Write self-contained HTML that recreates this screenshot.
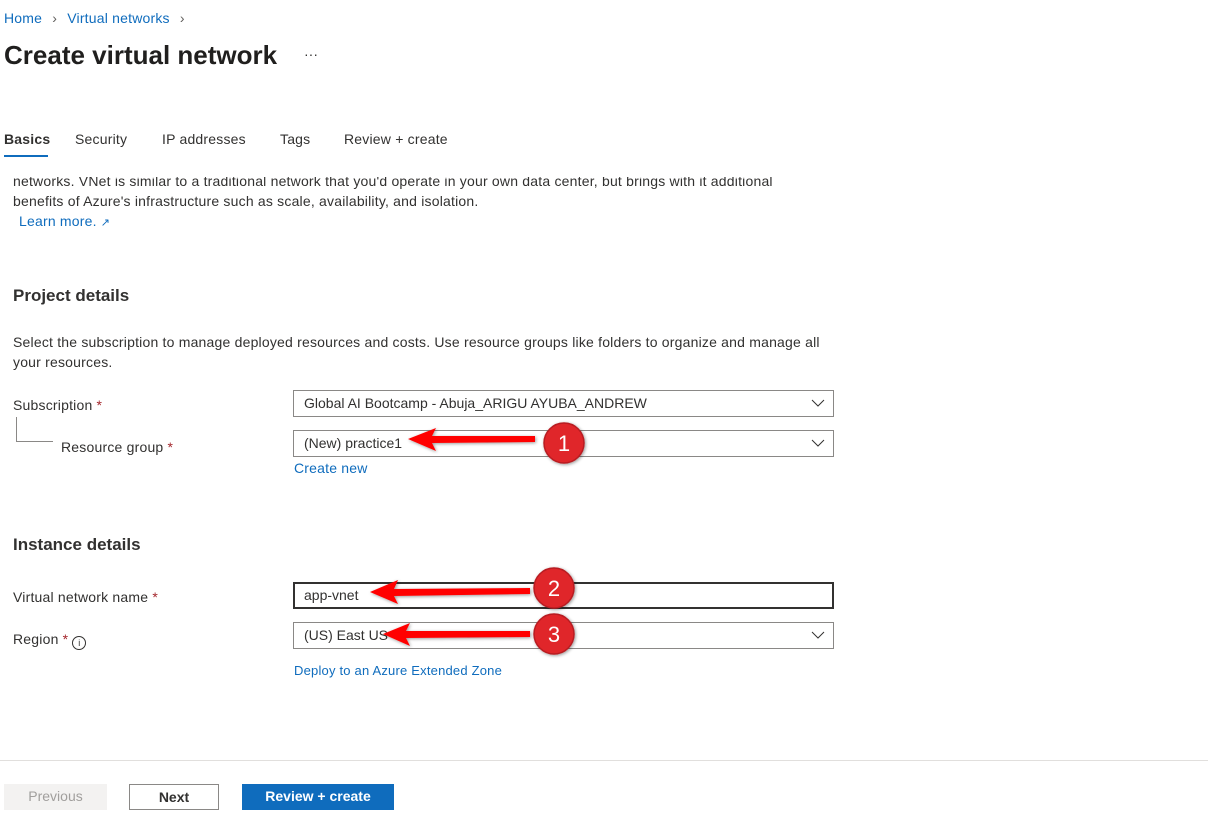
<!DOCTYPE html><html><head><style>
body{margin:0;width:1208px;height:825px;background:#fff;font-family:"Liberation Sans",sans-serif;color:#323130;position:relative;overflow:hidden}
.a{position:absolute;white-space:nowrap}
.l{color:#0f6cbd}
.f{font-size:14px;letter-spacing:0.2px}
.box{position:absolute;left:293px;width:539px;height:25px;border:1px solid #8a8886;box-sizing:content-box}
.box span{position:absolute;left:10px;top:4px;font-size:14px}
.chev{position:absolute;right:8px;top:6px}
.btn{position:absolute;top:784px;height:26px;font-size:14px;font-weight:bold;text-align:center;line-height:25px;box-sizing:border-box}
</style></head><body>
<div class="a f" style="left:4px;top:10px"><span class="l">Home</span> <span style="color:#605e5c;margin:0 6px">&#x203A;</span> <span class="l">Virtual networks</span> <span style="color:#605e5c;margin-left:6px">&#x203A;</span></div>
<div class="a" style="left:4px;top:40px;font-size:26px;font-weight:bold;color:#201f1e">Create virtual network</div>
<div class="a" style="left:304px;top:46px;font-size:14px">···</div>
<div class="a f" style="left:4px;top:131px;font-weight:bold">Basics</div>
<div style="position:absolute;left:4px;top:155px;width:44px;height:2px;background:#0f6cbd"></div>
<div class="a f" style="left:75px;top:131px">Security</div>
<div class="a f" style="left:162px;top:131px">IP addresses</div>
<div class="a f" style="left:280px;top:131px">Tags</div>
<div class="a f" style="left:344px;top:131px">Review + create</div>
<div style="position:absolute;left:0;top:177px;width:900px;height:13px;overflow:hidden"><div class="a f" style="left:13px;top:-4px">networks. VNet is similar to a traditional network that you'd operate in your own data center, but brings with it additional</div></div>
<div class="a f" style="left:13px;top:193px">benefits of Azure's infrastructure such as scale, availability, and isolation.</div>
<div class="a f l" style="left:19px;top:213px">Learn more. <span style="font-size:11px">&#x2197;</span></div>
<div class="a" style="left:13px;top:286px;font-size:17px;font-weight:bold">Project details</div>
<div class="a f" style="left:13px;top:334px">Select the subscription to manage deployed resources and costs. Use resource groups like folders to organize and manage all</div>
<div class="a f" style="left:13px;top:354px">your resources.</div>
<div class="a f" style="left:13px;top:397px">Subscription <span style="color:#a4262c">*</span></div>
<div style="position:absolute;left:16px;top:417px;width:36px;height:24px;border-left:1px solid #8a8886;border-bottom:1px solid #8a8886"></div>
<div class="a f" style="left:61px;top:439px">Resource group <span style="color:#a4262c">*</span></div>
<div class="box" style="top:390px"><span>Global AI Bootcamp - Abuja_ARIGU AYUBA_ANDREW</span><svg class="chev" width="14" height="12"><path d="M1 3l6 6 6-6" fill="none" stroke="#323130"/></svg></div>
<div class="box" style="top:430px"><span>(New) practice1</span><svg class="chev" width="14" height="12"><path d="M1 3l6 6 6-6" fill="none" stroke="#323130"/></svg></div>
<div class="a f l" style="left:294px;top:460px">Create new</div>
<div class="a" style="left:13px;top:535px;font-size:17px;font-weight:bold">Instance details</div>
<div class="a f" style="left:13px;top:589px">Virtual network name <span style="color:#a4262c">*</span></div>
<div class="box" style="top:582px;border:2px solid #323130;left:293px;width:537px;height:23px"><span style="left:9px;top:3px">app-vnet</span></div>
<div class="a f" style="left:13px;top:631px">Region <span style="color:#a4262c">*</span> <span style="display:inline-block;width:12px;height:12px;border:1px solid #323130;border-radius:50%;font-size:9px;text-align:center;line-height:12px;vertical-align:-2px">i</span></div>
<div class="box" style="top:622px"><span>(US) East US</span><svg class="chev" width="14" height="12"><path d="M1 3l6 6 6-6" fill="none" stroke="#323130"/></svg></div>
<div class="a f l" style="left:294px;top:663px;font-size:13px">Deploy to an Azure Extended Zone</div>
<div style="position:absolute;left:0;top:760px;width:1208px;height:1px;background:#e1dfdd"></div>
<div class="btn" style="left:4px;width:103px;background:#f3f2f1;color:#a19f9d;font-weight:normal">Previous</div>
<div class="btn" style="left:129px;width:90px;border:1px solid #8a8886;color:#323130">Next</div>
<div class="btn" style="left:242px;width:152px;background:#0f6cbd;color:#fff">Review + create</div>
<svg style="position:absolute;left:0;top:0" width="1208" height="825">
<defs><filter id="s"><feDropShadow dx="1" dy="1" stdDeviation="1.5" flood-opacity=".4"/></filter></defs>
<g fill="#f00" filter="url(#s)">
<polygon points="408,439 436,428 432,436 535,436 535,442 432,443 436,451"/>
<polygon points="370,592 398,580 394,589 530,588 530,594 394,596 398,604"/>
<polygon points="383,634 410,623 406,631 530,631 530,637 406,638 410,646"/>
</g>
<g fill="#e0262a" stroke="#b81d20" stroke-width="1.5" filter="url(#s)">
<circle cx="564" cy="443" r="20"/><circle cx="554" cy="588" r="20"/><circle cx="554" cy="634" r="20"/>
</g>
<g fill="#fff" font-family="Liberation Sans" font-size="22" text-anchor="middle">
<text x="564" y="451">1</text><text x="554" y="596">2</text><text x="554" y="642">3</text>
</g>
</svg>
</body></html>
